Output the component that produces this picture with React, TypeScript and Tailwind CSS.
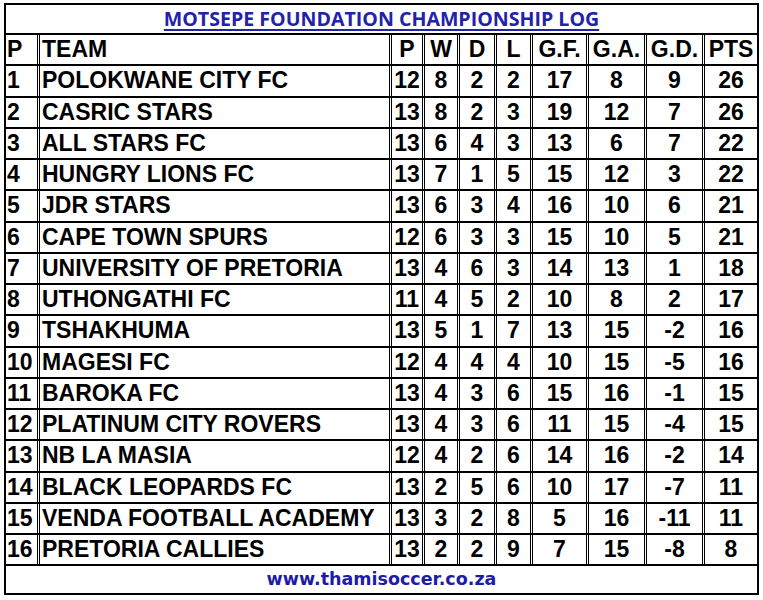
const rows: (string | number)[][] = [
  [1, "POLOKWANE CITY FC", 12, 8, 2, 2, 17, 8, 9, 26],
  [2, "CASRIC STARS", 13, 8, 2, 3, 19, 12, 7, 26],
  [3, "ALL STARS FC", 13, 6, 4, 3, 13, 6, 7, 22],
  [4, "HUNGRY LIONS FC", 13, 7, 1, 5, 15, 12, 3, 22],
  [5, "JDR STARS", 13, 6, 3, 4, 16, 10, 6, 21],
  [6, "CAPE TOWN SPURS", 12, 6, 3, 3, 15, 10, 5, 21],
  [7, "UNIVERSITY OF PRETORIA", 13, 4, 6, 3, 14, 13, 1, 18],
  [8, "UTHONGATHI FC", 11, 4, 5, 2, 10, 8, 2, 17],
  [9, "TSHAKHUMA", 13, 5, 1, 7, 13, 15, -2, 16],
  [10, "MAGESI FC", 12, 4, 4, 4, 10, 15, -5, 16],
  [11, "BAROKA FC", 13, 4, 3, 6, 15, 16, -1, 15],
  [12, "PLATINUM CITY ROVERS", 13, 4, 3, 6, 11, 15, -4, 15],
  [13, "NB LA MASIA", 12, 4, 2, 6, 14, 16, -2, 14],
  [14, "BLACK LEOPARDS FC", 13, 2, 5, 6, 10, 17, -7, 11],
  [15, "VENDA FOOTBALL ACADEMY", 13, 3, 2, 8, 5, 16, -11, 11],
  [16, "PRETORIA CALLIES", 13, 2, 2, 9, 7, 15, -8, 8],
];

const header = ["P", "TEAM", "P", "W", "D", "L", "G.F.", "G.A.", "G.D.", "PTS"];

function Row({ cells }: { cells: (string | number)[] }) {
  return (
    <div className="grid grid-cols-[34px_352px_33px_35px_37px_36px_56px_58px_58px_52px] h-[31.25px] border-b-2 border-black">
      {cells.map((c, i) => (
        <div
          key={i}
          className={
            "flex items-center leading-none whitespace-nowrap " +
            (i < 9 ? "border-r-[3px] border-double border-black " : "") +
            (i === 0 ? "pl-px" : i === 1 ? "pl-[2px]" : "justify-center")
          }
        >
          {c}
        </div>
      ))}
    </div>
  );
}

export default function App() {
  return (
    <div className="w-[763px] h-[600px] bg-white">
      <div
        className="ml-[4px] mt-[3px] w-[755px] border-2 border-black text-black font-bold text-[23px]"
        style={{ fontFamily: '"Liberation Sans", Arial, sans-serif' }}
      >
        {/* titel */}
        <div className="h-[30px] border-b-2 border-black flex items-center justify-center">
          <span
            className="text-[19.6px] font-bold text-[#2222aa] underline underline-offset-[3px] decoration-2 leading-none"
            style={{ fontFamily: '"Open Sans", sans-serif' }}
          >
            MOTSEPE FOUNDATION CHAMPIONSHIP LOG
          </span>
        </div>

        <Row cells={header} />
        {rows.map((r) => (
          <Row key={r[0]} cells={r} />
        ))}

        {/* footer */}
        <div className="h-[27px] flex items-center justify-center">
          <span
            className="text-[17.5px] font-bold text-[#1c1ca6] leading-none"
            style={{ fontFamily: '"DejaVu Sans", Verdana, sans-serif' }}
          >
            www.thamisoccer.co.za
          </span>
        </div>
      </div>
    </div>
  );
}
